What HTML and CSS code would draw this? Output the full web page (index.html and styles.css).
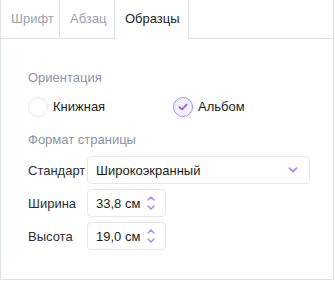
FILE: index.html
```html
<!DOCTYPE html>
<html lang="ru">
<head>
    <meta charset="UTF-8">
    <title>Макет</title>
<link rel="stylesheet" href="styles.css">
</head>
<body>
    <div class="panel">
        <ul class="tabs">
            <li>Шрифт</li>
            <li>Абзац</li>
            <li class="ac">Образцы</li>
        </ul>

        <div class="body">
            <h3>Ориентация</h3>
            <div class="orient">
                <label class="radio"><span class="dot"></span>Книжная</label>
                <label class="radio on"><span class="dot">
                    <svg width="10" height="8" viewBox="0 0 10 8"><path d="M1.5 4.2 L4 6.4 L8.6 1.6" fill="none" stroke="#8b5cf6" stroke-width="1.8" stroke-linecap="round" stroke-linejoin="round"/></svg>
                </span>Альбом</label>
            </div>

            <h3>Формат страницы</h3>
            <div class="row first">
                <span class="lbl">Стандарт</span>
                <div class="select">
                    Широкоэкранный
                    <svg width="10" height="6" viewBox="0 0 10 6"><path d="M1.5 1.2 L5 4.5 L8.5 1.2" fill="none" stroke="#a78bfa" stroke-width="1.8" stroke-linecap="round" stroke-linejoin="round"/></svg>
                </div>
            </div>
            <div class="row">
                <span class="lbl">Ширина</span>
                <div class="spin">
                    33,8 см
                    <svg width="10" height="18" viewBox="0 0 10 18"><path d="M2 6 L5 3 L8 6 M2 12 L5 15 L8 12" fill="none" stroke="#a78bfa" stroke-width="1.5" stroke-linecap="round" stroke-linejoin="round"/></svg>
                </div>
            </div>
            <div class="row">
                <span class="lbl">Высота</span>
                <div class="spin">
                    19,0 см
                    <svg width="10" height="18" viewBox="0 0 10 18"><path d="M2 6 L5 3 L8 6 M2 12 L5 15 L8 12" fill="none" stroke="#a78bfa" stroke-width="1.5" stroke-linecap="round" stroke-linejoin="round"/></svg>
                </div>
            </div>
        </div>
    </div>
</body>
</html>
```

FILE: styles.css
```css
*{margin:0;padding:0;box-sizing:border-box;}
ol,ul{list-style:none;}
body{background:#fff;font-family:"Liberation Sans",Arial,sans-serif;font-size:13px;color:#1a1d21;}
.panel{width:334px;height:280px;border:1px solid #dde2ea;border-top:none;}
.tabs{display:flex;height:39px;border-bottom:1px solid #dde2ea;}
.tabs li{padding:0 10px;line-height:38px;color:#9aa1ab;border-right:1px solid #dde2ea;}
.tabs li:first-child{width:59px;}
.tabs li:nth-child(2){width:55px;}
.tabs li.ac{color:#1a1d21;background:#fff;height:39px;width:74px;}
.body{padding:30px 0 0 27px;}
h3{font-weight:normal;font-size:13px;color:#8a94a6;line-height:18px;}
.orient{display:flex;margin:10px 0 14px;}
.radio{display:flex;align-items:center;gap:5px;line-height:20px;width:145px;}
.dot{width:20px;height:20px;border-radius:50%;border:1px solid #e3e6eb;display:flex;align-items:center;justify-content:center;}
.radio.on .dot{border:1.5px solid #a78bfa;background:#f5f0ff;}
.row{display:flex;align-items:center;margin-top:5px;}
.row.first{margin-top:7px;}
.lbl{width:59px;color:#2b2f36;}
.select,.spin{height:28px;border:1px solid #e4e7ec;border-radius:4px;display:flex;align-items:center;justify-content:space-between;padding:0 11px 0 8px;}
.select{width:223px;}
.spin{width:79px;padding-right:9px;}
```
